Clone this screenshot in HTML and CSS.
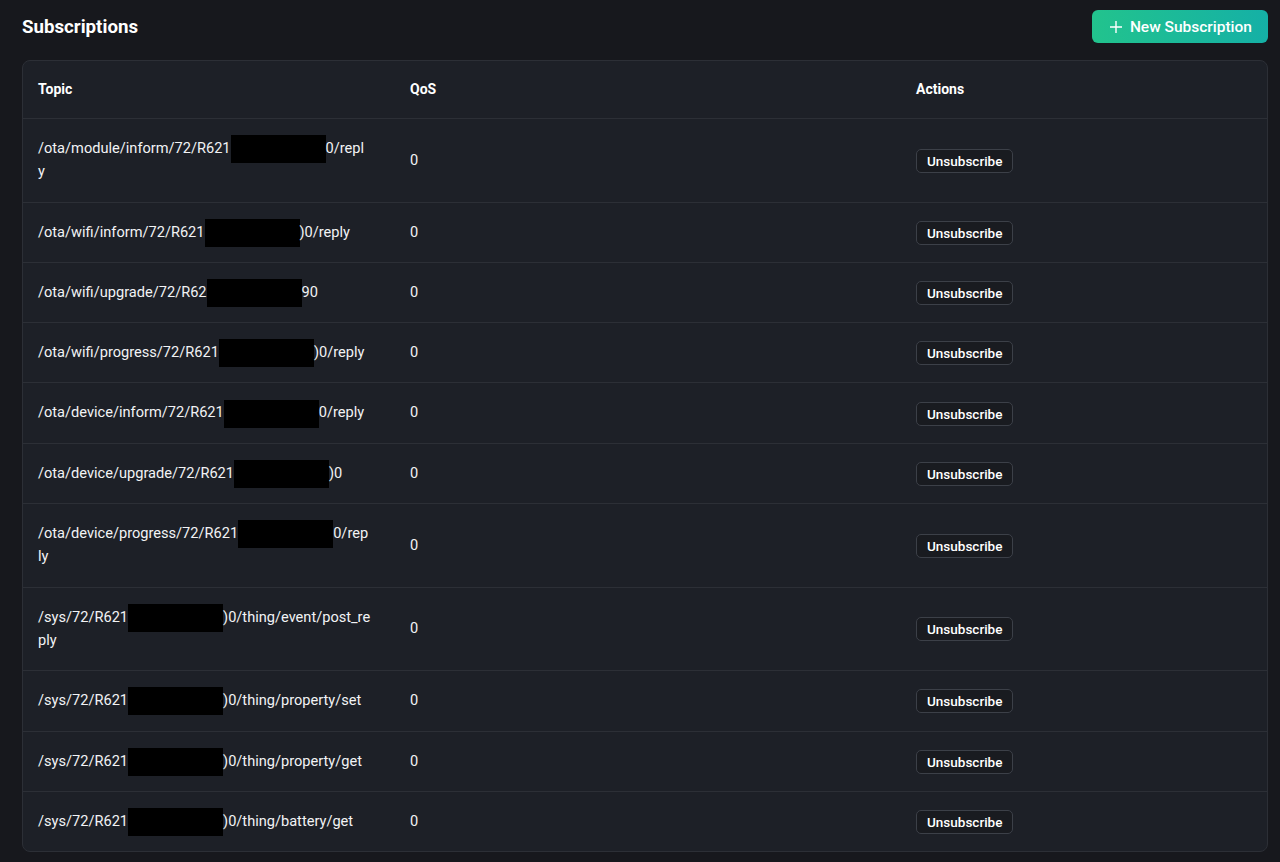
FILE: index.html
```html
<!DOCTYPE html>
<html>
<head>
<meta charset="UTF-8">
<title>Subscriptions</title>
<link rel="stylesheet" href="styles.css">
</head>
<body>
	<div class="page">
		<div class="page-head">
			<h1 class="title">Subscriptions</h1>
			<button class="btn-new" type="button">
				<svg width="14" height="14" viewBox="0 0 14 14"><path d="M7 1v12M1 7h12" stroke="#fff" stroke-width="1.4" fill="none"/></svg>
				New Subscription
			</button>
		</div>
		<div class="card">
			<table class="subs">
				<colgroup>
					<col class="col-topic">
					<col class="col-qos">
					<col>
				</colgroup>
				<thead>
					<tr><th>Topic</th><th>QoS</th><th>Actions</th></tr>
				</thead>
				<tbody>
					<tr><td>/ota/module/inform/72/R621<span class="mask"></span>0/repl<br>y</td><td>0</td><td><button class="btn-unsub" type="button">Unsubscribe</button></td></tr>
					<tr><td>/ota/wifi/inform/72/R621<span class="mask"></span>)0/reply</td><td>0</td><td><button class="btn-unsub" type="button">Unsubscribe</button></td></tr>
					<tr><td>/ota/wifi/upgrade/72/R62<span class="mask"></span>90</td><td>0</td><td><button class="btn-unsub" type="button">Unsubscribe</button></td></tr>
					<tr><td>/ota/wifi/progress/72/R621<span class="mask"></span>)0/reply</td><td>0</td><td><button class="btn-unsub" type="button">Unsubscribe</button></td></tr>
					<tr><td>/ota/device/inform/72/R621<span class="mask"></span>0/reply</td><td>0</td><td><button class="btn-unsub" type="button">Unsubscribe</button></td></tr>
					<tr><td>/ota/device/upgrade/72/R621<span class="mask"></span>)0</td><td>0</td><td><button class="btn-unsub" type="button">Unsubscribe</button></td></tr>
					<tr><td>/ota/device/progress/72/R621<span class="mask"></span>0/rep<br>ly</td><td>0</td><td><button class="btn-unsub" type="button">Unsubscribe</button></td></tr>
					<tr><td>/sys/72/R621<span class="mask"></span>)0/thing/event/post_re<br>ply</td><td>0</td><td><button class="btn-unsub" type="button">Unsubscribe</button></td></tr>
					<tr><td>/sys/72/R621<span class="mask"></span>)0/thing/property/set</td><td>0</td><td><button class="btn-unsub" type="button">Unsubscribe</button></td></tr>
					<tr><td>/sys/72/R621<span class="mask"></span>)0/thing/property/get</td><td>0</td><td><button class="btn-unsub" type="button">Unsubscribe</button></td></tr>
					<tr><td>/sys/72/R621<span class="mask"></span>)0/thing/battery/get</td><td>0</td><td><button class="btn-unsub" type="button">Unsubscribe</button></td></tr>
				</tbody>
			</table>
		</div>
	</div>
</body>
</html>
```

FILE: styles.css
```css
html, body {
	margin: 0;
	background: #17181d;
	color: #f2f3f5;
	font-family: Roboto, "Liberation Sans", sans-serif;
}

.page {
	padding: 10px 12px 12px 22px;
}

.page-head {
	display: flex;
	justify-content: space-between;
	align-items: center;
	height: 33px;
	margin-bottom: 17px;
}

.title {
	margin: 0;
	font-size: 18.7px;
	font-weight: 700;
	color: #fff;
}

.btn-new {
	display: flex;
	align-items: center;
	gap: 7px;
	height: 33px;
	padding: 0 16px 0 17px;
	border: 0;
	border-radius: 6px;
	background: linear-gradient(90deg, #22c38d, #15b0a6);
	color: #fff;
	font-family: inherit;
	font-size: 15.5px;
	font-weight: 500;
	cursor: pointer;
}

.card {
	background: #1d2027;
	border: 1px solid #2c2f36;
	border-radius: 8px;
	overflow: hidden;
}

.subs {
	width: 100%;
	border-collapse: collapse;
	table-layout: fixed;
}

.col-topic {
	width: 371px;
}

.col-qos {
	width: 506px;
}

.subs th, .subs td {
	text-align: left;
	padding: 18px 16px;
	vertical-align: middle;
}

.subs th:first-child, .subs td:first-child {
	padding-left: 15px;
	padding-right: 12px;
}

.subs th {
	font-size: 14px;
	font-weight: 700;
	line-height: 21px;
	border-bottom: 1px solid #2c2f36;
	color: #fff;
}

.subs td {
	font-size: 14.6px;
	line-height: 23.3px;
	border-bottom: 1px solid #2c2f36;
	white-space: nowrap;
}

.subs tr:last-child td {
	border-bottom: 0;
}

/* 打码块，不撑高行 */
.mask {
	display: inline-block;
	width: 95px;
	height: 28px;
	margin: -4px 0 -4px;
	background: #000;
	vertical-align: middle;
}

.btn-unsub {
	height: 24px;
	margin: -1px 0;
	padding: 0 10px;
	border: 1px solid #3c4048;
	border-radius: 5px;
	background: #191b20;
	color: #fff;
	font-family: inherit;
	font-size: 13.5px;
	font-weight: 500;
	vertical-align: middle;
	cursor: pointer;
}
```
